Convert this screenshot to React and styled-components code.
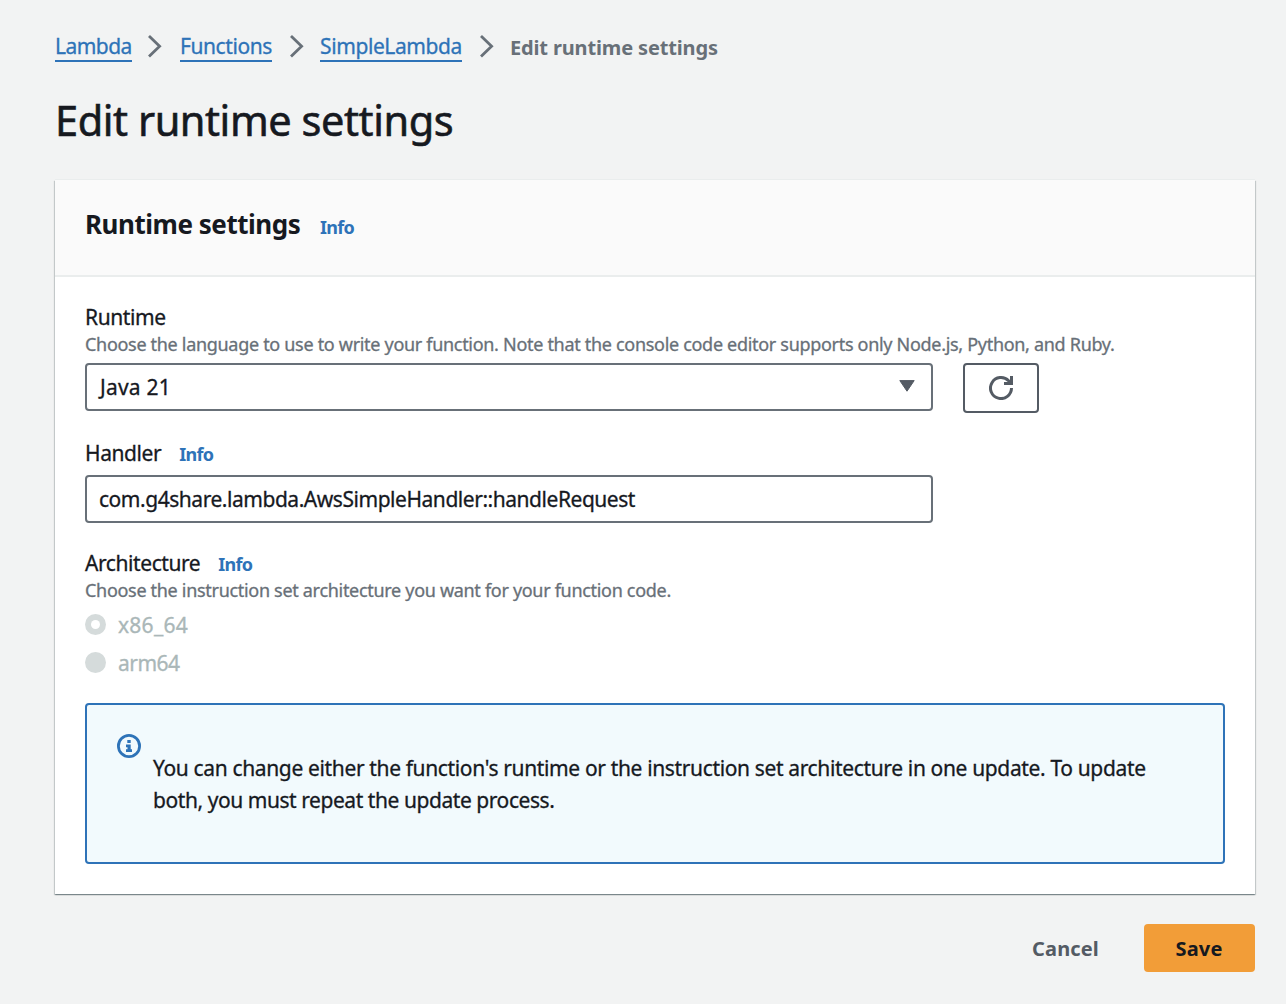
import React from 'react';
import styled, { createGlobalStyle } from 'styled-components';

const GlobalStyle = createGlobalStyle`
  *, *::before, *::after { box-sizing: border-box; }
  body {
    margin: 0;
    background: #f2f3f3;
    color: #16191f;
    font-family: "Noto Sans", "Open Sans", sans-serif;
    font-size: 21px;
    letter-spacing: -0.42px;
    -webkit-text-stroke: 0.3px currentColor;
  }
`;

const Page = styled.main`
  width: 1286px;
  min-height: 1004px;
  padding: 31px 31px 32px 55px;
`;

const Breadcrumbs = styled.nav`
  display: flex;
  align-items: flex-start;
  height: 31px;
  line-height: 31px;
`;

const Crumb = styled.a`
  width: ${(p) => p.$width}px;
  height: 31px;
  flex: none;
  color: #2e73b8;
  text-decoration: none;
  white-space: nowrap;
  letter-spacing: ${(p) => p.$tracking}px;
  border-bottom: 2px solid #2e73b8;
`;

const CurrentCrumb = styled.span`
  color: #687078;
  font-size: 20px;
  font-weight: 700;
  line-height: 34px;
  letter-spacing: -0.15px;
  -webkit-text-stroke: 0;
`;

const Separator = styled.svg`
  width: 48px;
  height: 30px;
  flex: none;
  padding-left: ${(p) => p.$inset}px;
`;

const Title = styled.h1`
  margin: 33px 0 35px;
  font-size: 41.5px;
  font-weight: 400;
  line-height: 50px;
  letter-spacing: -0.43px;
  -webkit-text-stroke: 0.6px currentColor;
`;

const Card = styled.section`
  background: #fff;
  box-shadow: 0 1px 1px 0 rgba(0, 28, 36, 0.3), 1px 1px 1px 0 rgba(0, 28, 36, 0.15),
    -1px 1px 1px 0 rgba(0, 28, 36, 0.15), 0 -1px 0 0 #eaeded;
`;

const CardHeader = styled.header`
  display: flex;
  align-items: baseline;
  height: 97px;
  padding: 25px 30px 0;
  background: #fafafa;
  border-bottom: 2px solid #eaeded;
`;

const CardTitle = styled.h2`
  margin: 0;
  width: 235px;
  font-size: 26px;
  font-weight: 700;
  line-height: 38px;
  letter-spacing: -0.47px;
  -webkit-text-stroke: 0;
`;

const InfoLink = styled.a`
  color: #2e73b8;
  font-size: 18px;
  font-weight: 700;
  letter-spacing: -0.7px;
  -webkit-text-stroke: 0;
`;

const CardBody = styled.div`
  display: flex;
  flex-direction: column;
  padding: 26px 30px 30px;
`;

const Field = styled.div`
  display: flex;
  flex-direction: column;
  margin-bottom: ${(p) => p.$gap}px;
`;

const LabelRow = styled.div`
  display: flex;
  align-items: baseline;
  gap: 18px;
  height: 28px;
  line-height: 29px;
`;

const Hint = styled.p`
  margin: 1px 0 ${(p) => p.$after}px;
  color: #687078;
  font-size: 18px;
  line-height: 24px;
  letter-spacing: -0.305px;
  white-space: nowrap;
`;

const ControlRow = styled.div`
  display: flex;
  align-items: flex-start;
  gap: 30px;
`;

const Select = styled.button`
  display: flex;
  align-items: center;
  justify-content: space-between;
  width: 848px;
  height: 48px;
  padding: 0 16px 0 13px;
  color: inherit;
  font: inherit;
  letter-spacing: 0.2px;
  background: #fff;
  border: 2px solid #687078;
  border-radius: 4px;
`;

const Caret = styled.svg`
  width: 16px;
  height: 12px;
  margin-top: -2px;
`;

const IconButton = styled.button`
  display: flex;
  align-items: center;
  justify-content: center;
  width: 76px;
  height: 50px;
  padding: 0;
  background: #fff;
  border: 2px solid #545b64;
  border-radius: 4px;
`;

const Input = styled.input`
  width: 848px;
  height: 48px;
  margin-top: 8px;
  padding: 0 12px;
  color: inherit;
  font: inherit;
  letter-spacing: -0.46px;
  background: #fff;
  border: 2px solid #687078;
  border-radius: 4px;
  outline: none;
`;

const RadioGroup = styled.div`
  display: flex;
  flex-direction: column;
  gap: 11px;
`;

const RadioRow = styled.label`
  display: flex;
  align-items: center;
  gap: 12px;
  height: 27px;
  line-height: 28px;
  color: #aab7b8;
  letter-spacing: ${(p) => p.$tracking}px;
`;

const RadioMark = styled.span`
  display: grid;
  place-items: center;
  width: 21px;
  height: 21px;
  border-radius: 50%;
  background: #d5dbdb;

  &::after {
    content: '';
    width: 9px;
    height: 9px;
    border-radius: 50%;
    background: ${(p) => (p.$checked ? '#fff' : 'transparent')};
  }
`;

const Alert = styled.div`
  display: flex;
  align-items: flex-start;
  gap: 12px;
  height: 161px;
  padding: 29px 30px;
  background: #f2fafd;
  border: 2px solid #2e73b8;
  border-radius: 4px;
`;

const AlertText = styled.p`
  margin: 18px 0 0;
  line-height: 32px;
  letter-spacing: -0.355px;
  white-space: nowrap;
`;

const LastLine = styled.span`
  letter-spacing: -0.44px;
`;

const Actions = styled.footer`
  display: flex;
  justify-content: flex-end;
  gap: 14px;
  margin-top: 30px;
`;

const Button = styled.button`
  height: 48px;
  width: ${(p) => (p.$primary ? 111 : 129)}px;
  padding: 1px ${(p) => (p.$primary ? 1 : 0)}px 0 0;
  border: 0;
  border-radius: 4px;
  background: ${(p) => (p.$primary ? '#f29d38' : 'transparent')};
  color: ${(p) => (p.$primary ? '#16191f' : '#545b64')};
  font: inherit;
  font-size: 20px;
  font-weight: 700;
  letter-spacing: 0.15px;
  -webkit-text-stroke: 0;
`;

function Chevron({ inset = 0 }) {
  return (
    <Separator $inset={inset} fill="none" stroke="#687078" strokeWidth="2.8">
      <path d="M17 5 27.6 15.2 17 25.4" />
    </Separator>
  );
}

function RefreshIcon() {
  return (
    <svg width="24" height="24" viewBox="0 0 24 24" fill="none" stroke="#545b64" strokeWidth="3">
      <path d="M22.5 12A10.5 10.5 0 1 1 19.6 4.8L22 7.4" />
      <path d="M22.5 0V7.5H15" />
    </svg>
  );
}

function InfoIcon() {
  return (
    <svg width="24" height="24" viewBox="0 0 24 24" fill="none">
      <circle cx="12" cy="12" r="10.6" stroke="#2e73b8" strokeWidth="2.8" />
      <path fill="#2e73b8" d="M10.3 6h3.4v3h-3.4zM9 10.6h4.7v4.7H15V18H9v-2.7h1.5v-2.1H9z" />
    </svg>
  );
}

export default function App() {
  return (
    <>
      <GlobalStyle />
      <Page>
        <Breadcrumbs>
          <Crumb $width={77} $tracking={-0.55}>Lambda</Crumb>
          <Chevron />
          <Crumb $width={92} $tracking={-0.41}>Functions</Crumb>
          <Chevron inset={2} />
          <Crumb $width={142} $tracking={-0.4}>SimpleLambda</Crumb>
          <Chevron inset={2} />
          <CurrentCrumb>Edit runtime settings</CurrentCrumb>
        </Breadcrumbs>
        <Title>Edit runtime settings</Title>
        <Card>
          <CardHeader>
            <CardTitle>Runtime settings</CardTitle>
            <InfoLink>Info</InfoLink>
          </CardHeader>
          <CardBody>
            <Field $gap={26}>
              <LabelRow>Runtime</LabelRow>
              <Hint $after={7}>
                Choose the language to use to write your function. Note that the console code editor
                supports only Node.js, Python, and Ruby.
              </Hint>
              <ControlRow>
                <Select>
                  Java 21
                  <Caret viewBox="0 0 16 12" fill="#545b64" stroke="#545b64" strokeLinejoin="round">
                    <path d="M.8.6h14.4L8 11.2z" />
                  </Caret>
                </Select>
                <IconButton aria-label="Refresh">
                  <RefreshIcon />
                </IconButton>
              </ControlRow>
            </Field>
            <Field $gap={26}>
              <LabelRow>
                Handler <InfoLink>Info</InfoLink>
              </LabelRow>
              <Input defaultValue="com.g4share.lambda.AwsSimpleHandler::handleRequest" />
            </Field>
            <Field $gap={27}>
              <LabelRow>
                Architecture <InfoLink>Info</InfoLink>
              </LabelRow>
              <Hint $after={9}>
                Choose the instruction set architecture you want for your function code.
              </Hint>
              <RadioGroup>
                <RadioRow $tracking={0.25}>
                  <RadioMark $checked />
                  x86_64
                </RadioRow>
                <RadioRow $tracking={-0.5}>
                  <RadioMark />
                  arm64
                </RadioRow>
              </RadioGroup>
            </Field>
            <Alert>
              <InfoIcon />
              <AlertText>
                You can change either the function's runtime or the instruction set architecture in
                one update. To update
                <br />
                <LastLine>both, you must repeat the update process.</LastLine>
              </AlertText>
            </Alert>
          </CardBody>
        </Card>
        <Actions>
          <Button>Cancel</Button>
          <Button $primary>Save</Button>
        </Actions>
      </Page>
    </>
  );
}
